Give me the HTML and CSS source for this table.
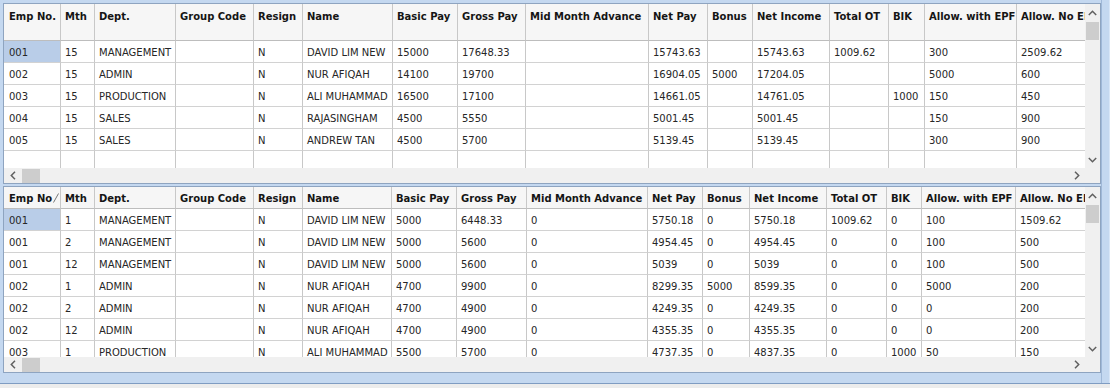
FILE: index.html
```html
<!DOCTYPE html>
<html lang="en">
  <head>
    <meta charset="UTF-8" />
    <title>Payroll Grid</title>
    <link rel="stylesheet" href="styles.css">
  </head>
  <body>

    <div class="frame">

      <div class="panel top">
        <div class="view">
          <table class="grid">
            <colgroup>
              <col style="width:57px"><col style="width:34px"><col style="width:81px"><col style="width:78px">
              <col style="width:49px"><col style="width:90px"><col style="width:65px"><col style="width:68px">
              <col style="width:123px"><col style="width:59px"><col style="width:45px"><col style="width:77px">
              <col style="width:59px"><col style="width:36px"><col style="width:92px"><col style="width:90px">
            </colgroup>
            <thead>
              <tr>
                <th>Emp No.</th><th>Mth</th><th>Dept.</th><th>Group Code</th><th>Resign</th><th>Name</th>
                <th>Basic Pay</th><th>Gross Pay</th><th>Mid Month Advance</th><th>Net Pay</th><th>Bonus</th>
                <th>Net Income</th><th>Total OT</th><th>BIK</th><th>Allow. with EPF</th><th>Allow. No EPF</th>
              </tr>
            </thead>
            <tbody>
              <tr><td class="sel">001</td><td>15</td><td>MANAGEMENT</td><td></td><td>N</td><td>DAVID LIM NEW</td><td>15000</td><td>17648.33</td><td></td><td>15743.63</td><td></td><td>15743.63</td><td>1009.62</td><td></td><td>300</td><td>2509.62</td></tr>
              <tr><td>002</td><td>15</td><td>ADMIN</td><td></td><td>N</td><td>NUR AFIQAH</td><td>14100</td><td>19700</td><td></td><td>16904.05</td><td>5000</td><td>17204.05</td><td></td><td></td><td>5000</td><td>600</td></tr>
              <tr><td>003</td><td>15</td><td>PRODUCTION</td><td></td><td>N</td><td>ALI MUHAMMAD</td><td>16500</td><td>17100</td><td></td><td>14661.05</td><td></td><td>14761.05</td><td></td><td>1000</td><td>150</td><td>450</td></tr>
              <tr><td>004</td><td>15</td><td>SALES</td><td></td><td>N</td><td>RAJASINGHAM</td><td>4500</td><td>5550</td><td></td><td>5001.45</td><td></td><td>5001.45</td><td></td><td></td><td>150</td><td>900</td></tr>
              <tr><td>005</td><td>15</td><td>SALES</td><td></td><td>N</td><td>ANDREW TAN</td><td>4500</td><td>5700</td><td></td><td>5139.45</td><td></td><td>5139.45</td><td></td><td></td><td>300</td><td>900</td></tr>
              <tr><td></td><td></td><td></td><td></td><td></td><td></td><td></td><td></td><td></td><td></td><td></td><td></td><td></td><td></td><td></td><td></td></tr>
            </tbody>
          </table>
        </div>
        <div class="vscroll">
          <div class="sb-btn"><svg width="9" height="6"><polyline points="0.8,5 4.5,1.3 8.2,5" /></svg></div>
          <div class="thumb"></div>
          <div class="sb-fill"></div>
          <div class="sb-btn"><svg width="9" height="6"><polyline points="0.8,1 4.5,4.7 8.2,1" /></svg></div>
        </div>
        <div class="hscroll">
          <div class="sb-btn"><svg width="6" height="9"><polyline points="5,0.8 1.3,4.5 5,8.2" /></svg></div>
          <div class="thumb"></div>
          <div class="sb-fill"></div>
          <div class="sb-btn"><svg width="6" height="9"><polyline points="1,0.8 4.7,4.5 1,8.2" /></svg></div>
        </div>
        <div class="corner"></div>
      </div>

      <div class="panel bottom">
        <div class="view">
          <table class="grid">
            <colgroup>
              <col style="width:57px"><col style="width:34px"><col style="width:81px"><col style="width:78px">
              <col style="width:49px"><col style="width:89px"><col style="width:65px"><col style="width:70px">
              <col style="width:121px"><col style="width:55px"><col style="width:47px"><col style="width:77px">
              <col style="width:60px"><col style="width:35px"><col style="width:94px"><col style="width:90px">
            </colgroup>
            <thead>
              <tr>
                <th>Emp No<svg class="sort" width="6" height="10"><line x1="0.5" y1="9.5" x2="5.5" y2="0.5" /></svg></th><th>Mth</th><th>Dept.</th><th>Group Code</th><th>Resign</th><th>Name</th>
                <th>Basic Pay</th><th>Gross Pay</th><th>Mid Month Advance</th><th>Net Pay</th><th>Bonus</th>
                <th>Net Income</th><th>Total OT</th><th>BIK</th><th>Allow. with EPF</th><th>Allow. No EPF</th>
              </tr>
            </thead>
            <tbody>
              <tr><td class="sel">001</td><td>1</td><td>MANAGEMENT</td><td></td><td>N</td><td>DAVID LIM NEW</td><td>5000</td><td>6448.33</td><td>0</td><td>5750.18</td><td>0</td><td>5750.18</td><td>1009.62</td><td>0</td><td>100</td><td>1509.62</td></tr>
              <tr><td>001</td><td>2</td><td>MANAGEMENT</td><td></td><td>N</td><td>DAVID LIM NEW</td><td>5000</td><td>5600</td><td>0</td><td>4954.45</td><td>0</td><td>4954.45</td><td>0</td><td>0</td><td>100</td><td>500</td></tr>
              <tr><td>001</td><td>12</td><td>MANAGEMENT</td><td></td><td>N</td><td>DAVID LIM NEW</td><td>5000</td><td>5600</td><td>0</td><td>5039</td><td>0</td><td>5039</td><td>0</td><td>0</td><td>100</td><td>500</td></tr>
              <tr><td>002</td><td>1</td><td>ADMIN</td><td></td><td>N</td><td>NUR AFIQAH</td><td>4700</td><td>9900</td><td>0</td><td>8299.35</td><td>5000</td><td>8599.35</td><td>0</td><td>0</td><td>5000</td><td>200</td></tr>
              <tr><td>002</td><td>2</td><td>ADMIN</td><td></td><td>N</td><td>NUR AFIQAH</td><td>4700</td><td>4900</td><td>0</td><td>4249.35</td><td>0</td><td>4249.35</td><td>0</td><td>0</td><td>0</td><td>200</td></tr>
              <tr><td>002</td><td>12</td><td>ADMIN</td><td></td><td>N</td><td>NUR AFIQAH</td><td>4700</td><td>4900</td><td>0</td><td>4355.35</td><td>0</td><td>4355.35</td><td>0</td><td>0</td><td>0</td><td>200</td></tr>
              <tr><td>003</td><td>1</td><td>PRODUCTION</td><td></td><td>N</td><td>ALI MUHAMMAD</td><td>5500</td><td>5700</td><td>0</td><td>4737.35</td><td>0</td><td>4837.35</td><td>0</td><td>1000</td><td>50</td><td>150</td></tr>
            </tbody>
          </table>
        </div>
        <div class="vscroll">
          <div class="sb-btn"><svg width="9" height="6"><polyline points="0.8,5 4.5,1.3 8.2,5" /></svg></div>
          <div class="thumb"></div>
          <div class="sb-fill"></div>
          <div class="sb-btn"><svg width="9" height="6"><polyline points="0.8,1 4.5,4.7 8.2,1" /></svg></div>
        </div>
        <div class="hscroll">
          <div class="sb-btn"><svg width="6" height="9"><polyline points="5,0.8 1.3,4.5 5,8.2" /></svg></div>
          <div class="thumb"></div>
          <div class="sb-fill"></div>
          <div class="sb-btn"><svg width="6" height="9"><polyline points="1,0.8 4.7,4.5 1,8.2" /></svg></div>
        </div>
        <div class="corner"></div>
      </div>

    </div>

  </body>
</html>
```

FILE: styles.css
```css
* { box-sizing: border-box; }
body { margin: 0; background: #ececec; font-family: 'DejaVu Sans', sans-serif; font-size: 10px; color: #262626; }

.frame {
  display: flex;
  flex-direction: column;
  gap: 2px;
  width: 1110px;
  padding: 3px 9px 10px 3px;
  background: #c4d8f0;
  border-bottom: 1px solid #7f9cc2;
  box-shadow: inset -1px 0 0 #d8e6f7, inset -8px 0 0 #c4d8f0, inset -9px 0 0 #9fb8d8;
}

.panel {
  display: grid;
  grid-template-columns: 1fr 15px;
  border: 1px solid #8ea4c0;
  background: #fff;
}
.panel.top { height: 181px; grid-template-rows: 164px 15px; }
.panel.bottom { height: 187px; grid-template-rows: 170px 15px; }

.view { overflow: hidden; }

.grid {
  table-layout: fixed;
  border-collapse: separate;
  border-spacing: 0;
  width: 1103px;
}
.bottom .grid { width: 1102px; }

.grid th, .grid td {
  padding: 0 4px;
  text-align: left;
  white-space: nowrap;
  overflow: hidden;
  border-right: 1px solid #c8c8c8;
  border-bottom: 1px solid #d2d2d2;
}
.grid th:first-child, .grid td:first-child { padding-left: 5px; }

.grid th {
  background: #f6f6f6;
  color: #151515;
  font-weight: bold;
  border-bottom-color: #bdbdbd;
}
.top .grid th { height: 37px; vertical-align: top; padding-top: 7px; }
.bottom .grid th { height: 22px; vertical-align: middle; padding-top: 2px; }

.grid td { height: 22px; vertical-align: middle; padding-top: 1px; }
.grid td.sel { background: #b9cde8; }

.sort { margin-left: 1px; vertical-align: -1px; }
.sort line { stroke: #777; stroke-width: 1; }

.vscroll, .hscroll { display: flex; background: #f0f0f0; }
.vscroll { flex-direction: column; }
.sb-btn { display: flex; align-items: center; justify-content: center; flex: none; }
.vscroll .sb-btn { height: 17px; }
.hscroll .sb-btn { width: 17px; }
.sb-btn polyline { fill: none; stroke: #606060; stroke-width: 1.5; }
.sb-fill { flex: 1; }

.thumb { background: #cdcdcd; flex: none; }
.vscroll .thumb { height: 18px; margin: 1px 1px 0 1px; }
.hscroll .thumb { width: 18px; margin: 1px 0 0 1px; }

.corner { background: #f0f0f0; }
```
